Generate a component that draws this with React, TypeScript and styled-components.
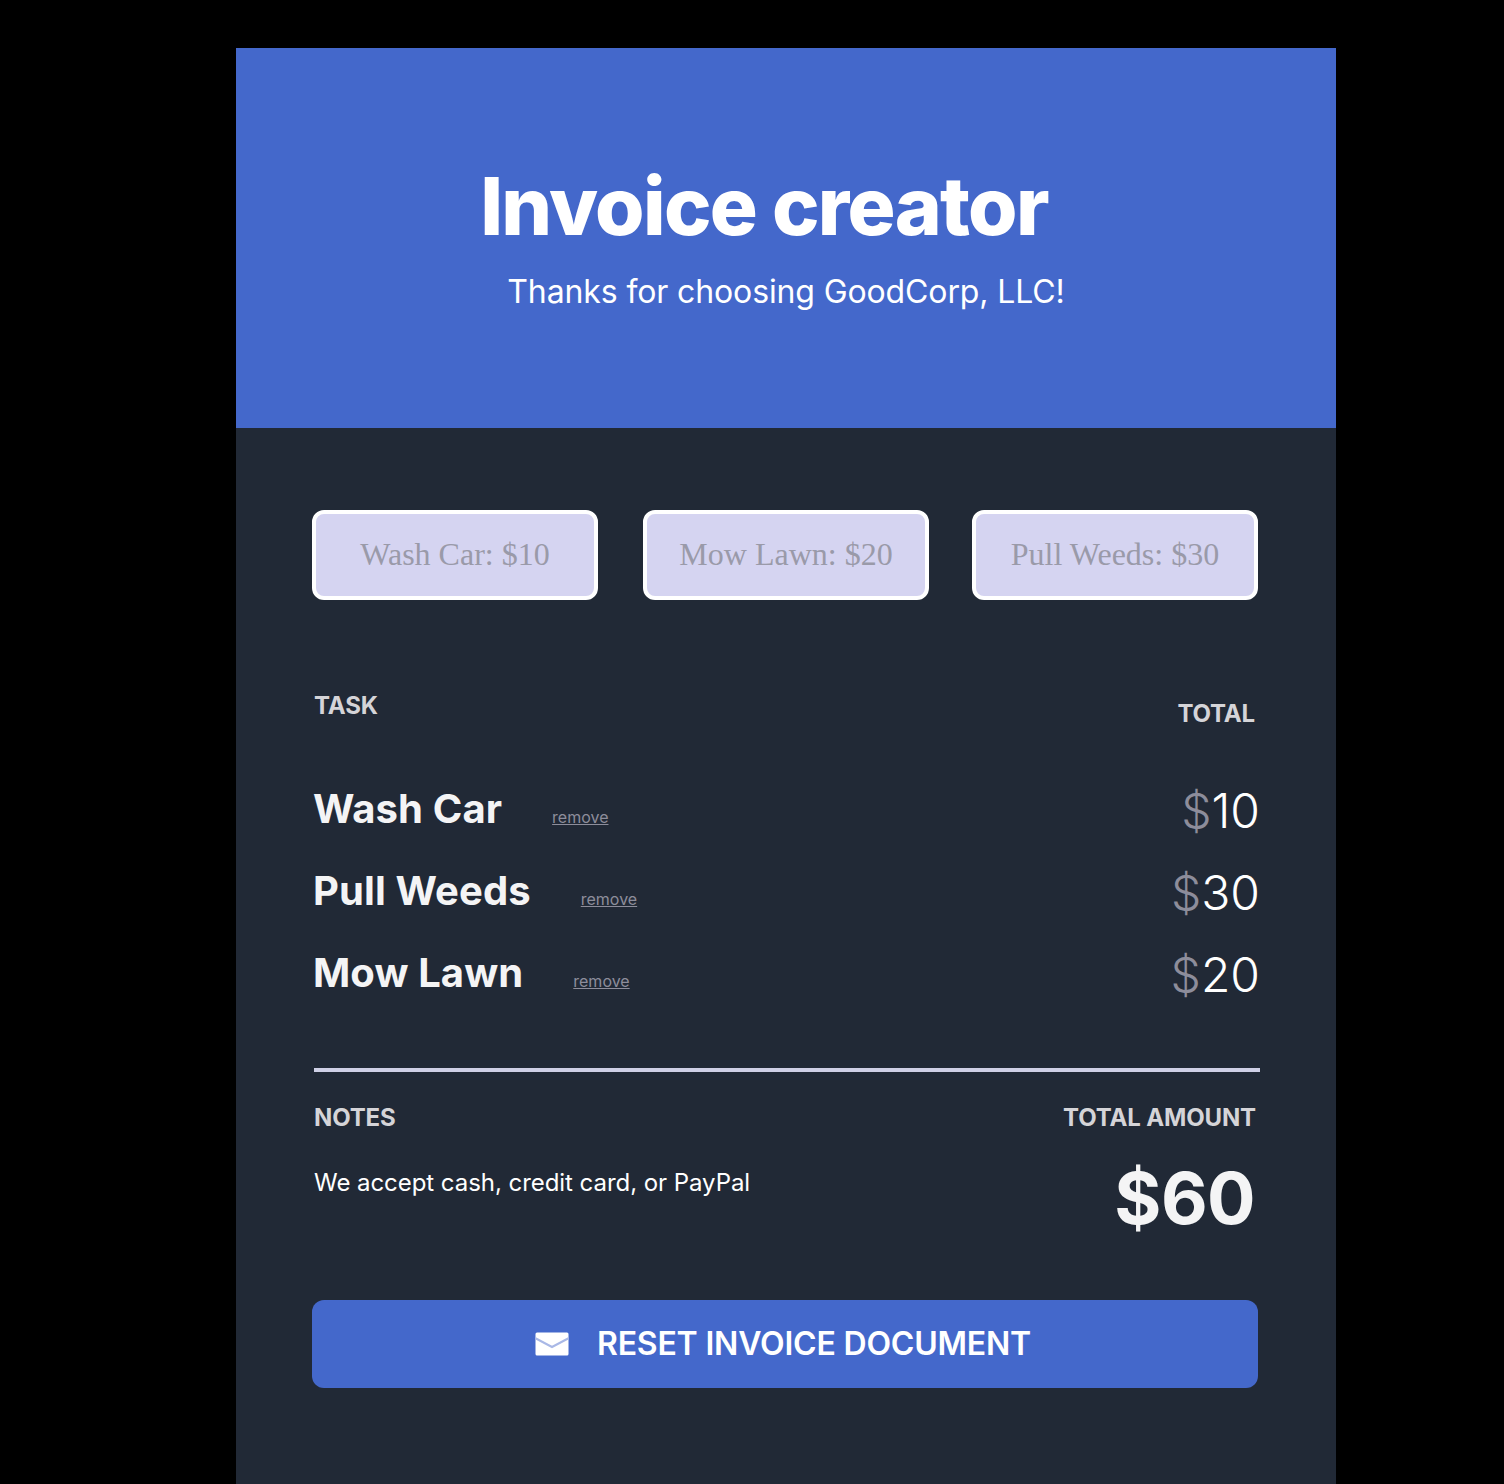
import React from "react";
import styled, { createGlobalStyle } from "styled-components";

const Global = createGlobalStyle`
  html, body { margin: 0; padding: 0; background: #000; }
  body { font-family: Inter, "Liberation Sans", sans-serif; height: 1484px; overflow: hidden; }
`;
const Page = styled.main`
  width: 1100px; height: 1436px; margin: 48px 0 0 236px; background: #212936; display: flex; flex-direction: column;
`;
const Hero = styled.header`
  height: 380px; background: #4468cb; display: flex; flex-direction: column; align-items: center; box-sizing: border-box; padding-top: 112px;
`;
const Title = styled.h1`
  margin: 0 0 0 -44px; font-size: 80px; line-height: 92px; font-weight: 800; letter-spacing: -1.7px; color: #fff;
`;
const Subtitle = styled.p`
  margin: 21px 0 0; font-size: 32px; line-height: 38px; font-weight: 400; color: #fff; letter-spacing: -0.12px;
`;
const Body = styled.section`
  padding: 82px 78px 0 76px; display: flex; flex-direction: column;
`;
const Services = styled.div`
  display: flex; gap: 45px;
  & > :last-child { margin-left: -2px; }
`;
const Service = styled.button`
  width: 286px; height: 90px; box-sizing: border-box; border: 4px solid #fff; border-radius: 12px; background: #d5d4f1; color: #9a9aa9;
  font-family: "Liberation Serif", serif; font-size: 32px; padding: 0 0 2px;
`;
const ColumnHeads = styled.div`
  display: flex; justify-content: space-between; margin: 91px 4px 0 2px;
`;
const Label = styled.span<{ $drop?: number }>`
  font-size: 24px; line-height: 30px; font-weight: 700; letter-spacing: -0.15px; color: #d5d4d8; margin-top: ${p => p.$drop ?? 0}px; margin-right: -1px;
`;
const Items = styled.ul`
  list-style: none; margin: 50px 0 0; padding: 0 0 0 2px; display: flex; flex-direction: column; gap: 22px;
`;
const Item = styled.li`
  display: flex; height: 60px; align-items: center; justify-content: space-between;
`;
const ItemLeft = styled.div`
  display: flex; align-items: center;
`;
const ItemName = styled.span`
  font-size: 40px; font-weight: 700; letter-spacing: 0.1px; margin-left: -1px; color: #f4f4f5; line-height: 60px;
`;
const Remove = styled.a`
  margin: 16px 0 0 50px; font-size: 16px; line-height: 20px; color: #8d8d9b; text-decoration: underline;
`;
const Amount = styled.span`
  font-size: 48px; line-height: 60px; font-weight: 300; color: #fff; margin-right: -2px; margin-top: 3px;
`;
const Dollar = styled.span`
  color: #8d8d9b;
`;
const Divider = styled.hr`
  border: 0; height: 4px; background: #cfd0e6; margin: 65px -2px 0 2px;
`;
const Summary = styled.div`
  display: flex; justify-content: space-between; margin: 31px 3px 0 2px;
`;
const Column = styled.div<{ $end?: boolean }>`
  display: flex; flex-direction: column; align-items: ${p => (p.$end ? "flex-end" : "flex-start")};
`;
const Note = styled.p`
  margin: 35px 0 0; font-size: 24px; line-height: 30px; color: #fff; letter-spacing: -0.05px;
`;
const Grand = styled.div`
  font-size: 72px; line-height: 88px; font-weight: 700; letter-spacing: -0.6px; color: #f4f4f5; margin-top: 21px;
`;
const Reset = styled.button`
  margin-top: 58px; height: 88px; border: 0; border-radius: 12px; background: #4468cb; color: #fff; display: flex; align-items: center; justify-content: center; gap: 28px;
  font-family: Inter, sans-serif; font-size: 32px; font-weight: 600; letter-spacing: -0.2px; padding: 0 4px 2px 0;
`;
const MailIcon = styled.svg`
  margin-top: 2px; flex: none;
`;

const Mail = () => (
  <MailIcon width="34" height="24" viewBox="0 0 34 24" aria-hidden="true">
    <rect x="0.5" y="0.5" width="33" height="23" rx="1.5" fill="#fff" />
    <path d="M0 6 L17 15 L34 6" fill="none" stroke="#a9b8e6" strokeWidth="2" />
  </MailIcon>
);

const services = ["Wash Car: $10", "Mow Lawn: $20", "Pull Weeds: $30"];
const items = [["Wash Car", "10"], ["Pull Weeds", "30"], ["Mow Lawn", "20"]];

export default function App() {
  return (
    <>
      <Global />
      <Page>
        <Hero>
          <Title>Invoice creator</Title>
          <Subtitle>Thanks for choosing GoodCorp, LLC!</Subtitle>
        </Hero>
        <Body>
          <Services>
            {services.map(s => <Service key={s}>{s}</Service>)}
          </Services>
          <ColumnHeads>
            <Label>TASK</Label>
            <Label $drop={8}>TOTAL</Label>
          </ColumnHeads>
          <Items>
            {items.map(([n, a]) => (
              <Item key={n}>
                <ItemLeft>
                  <ItemName>{n}</ItemName>
                  <Remove>remove</Remove>
                </ItemLeft>
                <Amount><Dollar>$</Dollar>{a}</Amount>
              </Item>
            ))}
          </Items>
          <Divider />
          <Summary>
            <Column>
              <Label>NOTES</Label>
              <Note>We accept cash, credit card, or PayPal</Note>
            </Column>
            <Column $end>
              <Label>TOTAL AMOUNT</Label>
              <Grand>$60</Grand>
            </Column>
          </Summary>
          <Reset><Mail />RESET INVOICE DOCUMENT</Reset>
        </Body>
      </Page>
    </>
  );
}
